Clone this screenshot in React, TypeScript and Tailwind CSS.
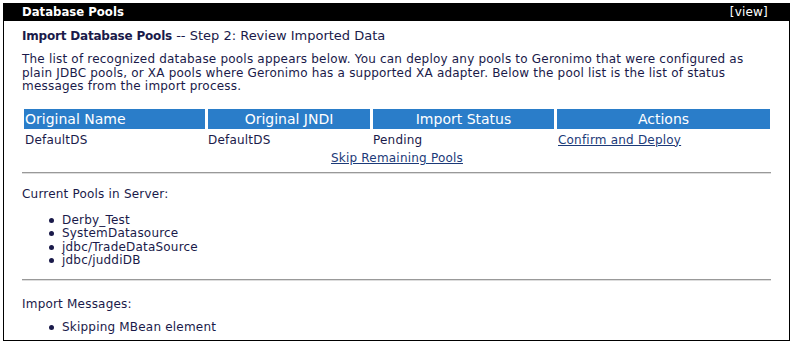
import React from "react";

const font = { fontFamily: '"DejaVu Sans", Verdana, sans-serif' };

function Bullet({ children }: { children: React.ReactNode }) {
  return (
    <div className="flex items-center h-[13.5px]">
      <span className="ml-[27px] w-[5px] h-[5px] rounded-full bg-[#1a1a4a]" />
      <span className="ml-[8px]">{children}</span>
    </div>
  );
}

export default function App() {
  return (
    <div className="bg-white w-[793px] h-[343px] pt-[3px] pl-[3px]" style={font}>
      <div className="w-[787px] h-[338px] border border-black text-[12px] tracking-[0.2px] leading-[13.5px] text-[#1a1a4a] flex flex-col overflow-hidden">
        <div className="h-[17px] shrink-0 bg-black text-white flex items-center justify-between pl-[18px] pr-[21px]">
          <span className="font-bold text-[11.7px] tracking-[0px]">Database Pools</span>
          <span>[view]</span>
        </div>
        <div className="pl-[18px] pr-[18px]">
          <div className="mt-[7px] text-[13px] leading-[15px] tracking-[0px]">
            <span className="font-bold text-[12px] tracking-[-0.2px]">Import Database Pools</span> -- Step 2: Review Imported Data
          </div>
          <p className="mt-[9px] w-[740px]">
            The list of recognized database pools appears below. You can deploy any pools to Geronimo that were configured as plain JDBC pools, or XA pools where Geronimo has a supported XA adapter. Below the pool list is the list of status messages from the import process.
          </p>
          <div className="mt-[15px] ml-[2px] w-[746px]">
            <div className="grid grid-cols-[181px_162px_181px_213px] gap-x-[3px] h-[20px] text-[14px] tracking-[0px] leading-[20px] text-white">
              <div className="bg-[#2a7dc9] pl-[1px]">Original Name</div>
              <div className="bg-[#2a7dc9] text-center">Original JNDI</div>
              <div className="bg-[#2a7dc9] text-center">Import Status</div>
              <div className="bg-[#2a7dc9] text-center">Actions</div>
            </div>
            <div className="grid grid-cols-[181px_162px_181px_213px] gap-x-[3px] mt-[4px] h-[15px] leading-[15px]">
              <div className="pl-[1px]">DefaultDS</div>
              <div>DefaultDS</div>
              <div>Pending</div>
              <div className="pl-[1px]">
                <a className="underline text-[#1c3a78]">Confirm and Deploy</a>
              </div>
            </div>
            <div className="text-center mt-[4px]">
              <a className="underline text-[#1c3a78]">Skip Remaining Pools</a>
            </div>
          </div>
          <div className="mt-[7px] w-[749px] h-[2px] border-t border-t-[#999] border-b border-b-[#ddd]" />
          <div className="mt-[14px]">Current Pools in Server:</div>
          <div className="mt-[12px]">
            <Bullet>Derby_Test</Bullet>
            <Bullet>SystemDatasource</Bullet>
            <Bullet>jdbc/TradeDataSource</Bullet>
            <Bullet>jdbc/juddiDB</Bullet>
          </div>
          <div className="mt-[11px] w-[749px] h-[2px] border-t border-t-[#999] border-b border-b-[#ddd]" />
          <div className="mt-[17px]">Import Messages:</div>
          <div className="mt-[10px]">
            <Bullet>Skipping MBean element</Bullet>
          </div>
        </div>
      </div>
    </div>
  );
}
